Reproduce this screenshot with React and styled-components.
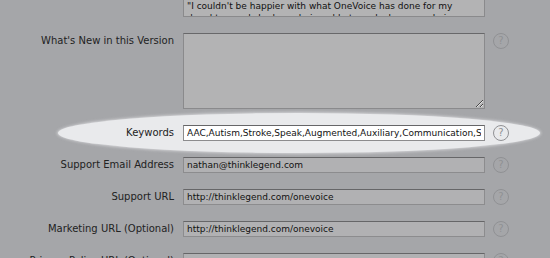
import styled, { createGlobalStyle } from 'styled-components';

const GlobalStyle = createGlobalStyle`
  html, body {
    margin: 0;
    padding: 0;
    background: #a5a6a9;
    overflow: hidden;
  }
`;

const Page = styled.div`
  width: 550px;
  height: 258px;
  overflow: hidden;
  font-family: "DejaVu Sans", "Lucida Grande", sans-serif;
`;

// formulário começa acima da janela, só o fim da descrição aparece
const Form = styled.div`
  display: flex;
  flex-direction: column;
  gap: 16px;
  margin-top: -59px;
`;

const Row = styled.div`
  position: relative;
  display: grid;
  grid-template-columns: 183px 302px 32px;
  align-items: start;

  ${(p) => p.$highlight && `
    &::before {
      content: '';
      position: absolute;
      left: 58px;
      top: -12px;
      width: 482px;
      height: 40px;
      border-radius: 50%;
      background: #e9eaec;
      box-shadow: 0 0 3px 1px rgba(233, 234, 236, 0.7);
      z-index: 0;
    }
  `}
`;

const Label = styled.div`
  position: relative;
  z-index: 1;
  text-align: right;
  padding-right: 9px;
  font-size: 10px;
  line-height: 16px;
  color: #222;
  white-space: nowrap;
`;

const Field = styled.input`
  position: relative;
  z-index: 1;
  box-sizing: border-box;
  width: 302px;
  height: 16px;
  margin: 0;
  padding: 0 3px;
  border: 1px solid #8c8c8e;
  border-top-color: #666668;
  background: ${(p) => (p.$active ? '#ffffff' : '#b1b1b3')};
  font-family: "DejaVu Sans", "Lucida Grande", sans-serif;
  font-size: 9px;
  color: #111;
  outline: none;
`;

const Area = styled.textarea`
  box-sizing: border-box;
  width: 302px;
  height: 76px;
  margin: 0;
  padding: 0 3px;
  border: 1px solid #8a8a8c;
  border-top-color: #68686a;
  background: #b3b3b4;
  font-family: "DejaVu Sans", "Lucida Grande", sans-serif;
  font-size: 9px;
  line-height: 12px;
  color: #111;
  resize: vertical;
  outline: none;
  overflow: hidden;
`;

// só o fim da caixa aparece no topo da janela
const DescriptionBox = styled.div`
  box-sizing: border-box;
  width: 302px;
  height: 76px;
  padding: 58px 3px 0;
  border: 1px solid #8a8a8c;
  background: #b3b3b4;
  font-size: 9px;
  line-height: 12px;
  color: #111;
  overflow: hidden;
  white-space: nowrap;
`;

const HelpCell = styled.div`
  position: relative;
  z-index: 1;
  padding-left: 8px;
  height: 16px;
  display: flex;
  align-items: center;
`;

const Help = styled.span`
  box-sizing: border-box;
  width: 16px;
  height: 16px;
  border-radius: 50%;
  border: 1px solid #909194;
  color: #909194;
  font-size: 10px;
  line-height: 14px;
  text-align: center;
`;

const fields = [
  { label: 'Keywords', value: 'AAC,Autism,Stroke,Speak,Augmented,Auxiliary,Communication,Speech', active: true },
  { label: 'Support Email Address', value: 'nathan@thinklegend.com' },
  { label: 'Support URL', value: 'http://thinklegend.com/onevoice' },
  { label: 'Marketing URL (Optional)', value: 'http://thinklegend.com/onevoice' },
  { label: 'Privacy Policy URL (Optional)', value: '' },
];

export default function App() {
  return (
    <Page>
      <GlobalStyle />
      <Form>
        <Row>
          <Label />
          <DescriptionBox>
            "I couldn't be happier with what OneVoice has done for my<br />
            daughter, and she loves being able to make her own choices.
          </DescriptionBox>
          <HelpCell />
        </Row>
        <Row>
          <Label>What's New in this Version</Label>
          <Area readOnly defaultValue="" />
          <HelpCell>
            <Help>?</Help>
          </HelpCell>
        </Row>
        {fields.map((f) => (
          <Row key={f.label} $highlight={f.active}>
            <Label>{f.label}</Label>
            <Field readOnly defaultValue={f.value} $active={f.active} />
            <HelpCell>
              <Help>?</Help>
            </HelpCell>
          </Row>
        ))}
      </Form>
    </Page>
  );
}
